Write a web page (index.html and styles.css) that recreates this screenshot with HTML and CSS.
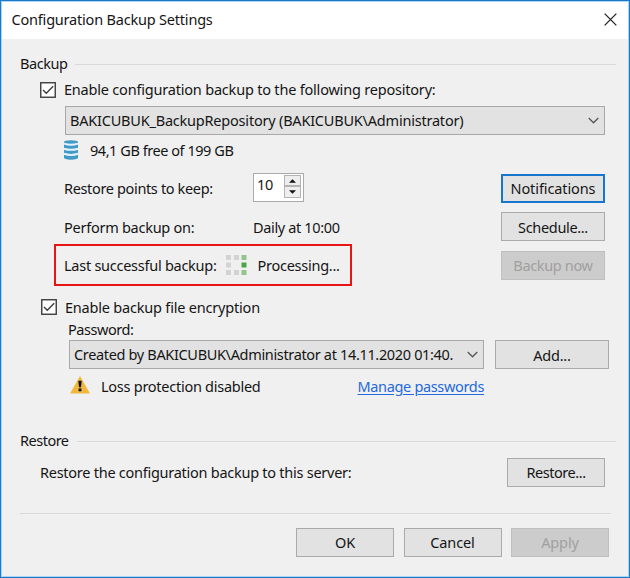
FILE: index.html
```html
<!DOCTYPE html>
<html lang="en">
<head>
<meta charset="utf-8">
<title>Configuration Backup Settings</title>
<link rel="stylesheet" href="styles.css">
</head>
<body>
<main class="dialog">
  <header class="titlebar">
    <span class="title">Configuration Backup Settings</span>
    <svg class="close" viewBox="0 0 14 14"><path d="M.7 .7 13.3 13.3M13.3 .7 .7 13.3"/></svg>
  </header>

  <section class="backup">
    <h2 class="group"><span class="t-backup">Backup</span></h2>
    <div class="check-row enable">
      <svg class="checkbox" viewBox="0 0 16 16"><rect x=".75" y=".75" width="14.5" height="14.5"/><path d="M3 8 6.3 11.3 13.2 4.2"/></svg>
      <span class="t-enable">Enable configuration backup to the following repository:</span>
    </div>
    <div class="select repository">
      <span class="t-repo">BAKICUBUK_BackupRepository (BAKICUBUK\Administrator)</span>
      <svg class="chevron" viewBox="0 0 12 7"><path d="M.8 .8 6 6 11.2 .8"/></svg>
    </div>
    <div class="capacity">
      <svg class="disk" viewBox="0 0 14 20">
        <path class="disk-body" d="M0 2.2Q0 .3 7 .3T14 2.2V17.6Q14 19.7 7 19.7T0 17.6Z"/>
        <path class="disk-gap" d="M0 3.6Q7 5.9 14 3.6M0 8.7Q7 11 14 8.7M0 13.8Q7 16.1 14 13.8"/>
      </svg>
      <span class="t-free">94,1 GB free of 199 GB</span>
    </div>
    <div class="setting">
      <span class="label t-points">Restore points to keep:</span>
      <div class="spinner">
        <span class="t-ten">10</span>
        <div class="steps">
          <div class="step"><svg viewBox="0 0 8 4"><path d="M0 4 4 0 8 4Z"/></svg></div>
          <div class="step"><svg viewBox="0 0 8 4"><path d="M0 0 4 4 8 0Z"/></svg></div>
        </div>
      </div>
      <div class="button focused"><span class="t-notif">Notifications</span></div>
    </div>
    <div class="setting">
      <span class="label t-perform">Perform backup on:</span>
      <span class="t-daily">Daily at 10:00</span>
      <div class="button"><span class="t-sched">Schedule...</span></div>
    </div>
    <div class="setting">
      <div class="highlight">
        <span class="t-last">Last successful backup:</span>
        <svg class="progress" viewBox="0 0 21 20">
          <path class="idle" d="M0 0h5v5H0zM8 0h5v5H8zM0 7.5h5v5H0zM0 15h5v5H0zM8 15h5v5H8z"/>
          <path class="near" d="M15.5 0h5v5h-5zM15.5 15h5v5h-5z"/>
          <path class="active" d="M15.5 7.5h5v5h-5z"/>
        </svg>
        <span class="t-proc">Processing...</span>
      </div>
      <div class="button disabled"><span class="t-now">Backup now</span></div>
    </div>
    <div class="check-row encryption">
      <svg class="checkbox" viewBox="0 0 16 16"><rect x=".75" y=".75" width="14.5" height="14.5"/><path d="M3 8 6.3 11.3 13.2 4.2"/></svg>
      <span class="t-encrypt">Enable backup file encryption</span>
    </div>
    <div class="password-label"><span class="t-pass">Password:</span></div>
    <div class="password-row">
      <div class="select password">
        <span class="t-created">Created by BAKICUBUK\Administrator at 14.11.2020 01:40.</span>
        <svg class="chevron" viewBox="0 0 12 7"><path d="M.8 .8 6 6 11.2 .8"/></svg>
      </div>
      <div class="button add"><span class="t-add">Add...</span></div>
    </div>
    <div class="loss-row">
      <svg class="warning" viewBox="0 0 20 18"><path class="triangle" d="M10 0 20 17.5H0Z"/><path class="mark" d="M8.3 4.8h3.4L11 11.3H9ZM8.6 12.6h2.8v2.7H8.6z"/></svg>
      <span class="t-loss">Loss protection disabled</span>
      <a class="link"><span class="t-manage">Manage passwords</span></a>
    </div>
  </section>

  <section class="restore">
    <h2 class="group"><span class="t-restore">Restore</span></h2>
    <div class="restore-row">
      <span class="t-server">Restore the configuration backup to this server:</span>
      <div class="button small"><span class="t-restbtn">Restore...</span></div>
    </div>
  </section>

  <footer class="actions">
    <div class="button small"><span class="t-ok">OK</span></div>
    <div class="button small"><span class="t-cancel">Cancel</span></div>
    <div class="button small disabled"><span class="t-apply">Apply</span></div>
  </footer>
</main>
</body>
</html>
```

FILE: styles.css
```css
* { box-sizing: border-box; }
body {
  margin: 0;
  font: 14.5px/20px "Noto Sans", "Open Sans", sans-serif;
  letter-spacing: -0.25px;
  color: #151515;
}
svg { display: block; flex: none; overflow: visible; }
span { white-space: nowrap; }
.dialog {
  width: 630px;
  height: 578px;
  border: 1px solid #1e78c8;
  box-shadow: inset 0 0 0 1px #a9d5f7;
  background: #f0f0f0;
  padding: 1px;
}
.titlebar {
  height: 37px;
  background: #fff;
  display: flex;
  align-items: center;
  justify-content: space-between;
  padding: 0 11px 1px 9.5px;
}
.close { width: 13px; height: 13px; margin-bottom: 2px; fill: none; stroke: #222; stroke-width: 1.4; }
.group {
  margin: 0 12px 0 18px;
  height: 20px;
  font: inherit;
  display: flex;
  align-items: center;
}
.group::after { content: ""; height: 1px; background: #d9d9d9; flex: 1; margin-left: 8px; }
.backup { padding-top: 15px; height: 392px; }
.check-row { display: flex; align-items: center; gap: 8px; height: 20px; }
.checkbox { width: 16px; height: 16px; fill: #fff; stroke: #3c3c3c; stroke-width: 1.4; }
.enable { margin: 5.5px 0 0 38px; }
.select {
  height: 29px;
  border: 1px solid #a8a8a8;
  background: #e2e2e2;
  display: flex;
  align-items: center;
  justify-content: space-between;
  padding: 0 5px 0 4px;
}
.chevron { width: 11px; height: 7px; fill: none; stroke: #555; stroke-width: 1.4; }
.repository { margin: 6.5px 23px 0 63px; }
.capacity { display: flex; align-items: center; gap: 12px; height: 30px; margin: 0 0 0 62px; }
.disk { width: 14px; height: 20px; }
.disk-body { fill: #4199c8; }
.disk-gap { fill: none; stroke: #e5f3fa; stroke-width: 2; }
.setting {
  height: 38.5px;
  margin: 0 23px 0 62px;
  display: flex;
  align-items: center;
}
.capacity + .setting { margin-top: 4px; }
.label { width: 189px; flex: none; }
.button {
  width: 104px;
  height: 29px;
  border: 1px solid #aaa;
  background: #e2e2e2;
  display: flex;
  align-items: center;
  justify-content: center;
}
.setting .button { margin-left: auto; }
.button.focused { border: 2px solid #1777cf; }
.button.disabled { background: #ccc; border-color: #c0c0c0; color: #a0a0a0; }
.button.small { width: 98px; }
.spinner {
  width: 51px;
  height: 29px;
  border: 1px solid #aaa;
  background: #fff;
  display: flex;
  justify-content: space-between;
  padding: 1px 2px 3px 3px;
  margin-top: -2px;
}
.t-ten { margin-top: -1px; letter-spacing: -0.4px; }
.steps { width: 17px; display: grid; grid-template-rows: 1fr 1fr; }
.step { border: 1px solid #b4b4b4; background: #eee; display: grid; place-items: center; }
.step svg { width: 7px; height: 4px; fill: #111; }
.highlight {
  width: 298px;
  height: 42px;
  margin: -2px 0 -2px -10px;
  border: 2px solid #e81313;
  padding-left: 8px;
  display: flex;
  align-items: center;
}
.t-last { width: 153px; }
.progress { width: 21px; height: 20px; margin: 0 10.5px 0 9px; }
.idle { fill: #d3d3d3; }
.near { fill: #93c48b; }
.active { fill: #4ba446; }
.encryption { margin: 12.5px 0 0 39px; }
.password-label { margin: 2px 0 1px 66px; height: 20px; }
.password-row { display: flex; justify-content: space-between; margin: 0 19px 0 67px; }
.password { width: 415px; }
.add { width: 114px; }
.loss-row { display: flex; align-items: center; height: 20px; margin: 6.5px 144px 0 68px; }
.warning { width: 20px; height: 18px; margin: -1px 11px 0 0; }
.triangle { fill: #f0b83e; }
.mark { fill: #111; }
.link { margin-left: auto; color: #2468df; text-decoration: underline; text-underline-offset: 2px; }
.restore { height: 82px; }
.restore-row {
  display: flex;
  align-items: center;
  justify-content: space-between;
  margin: 6px 23px 0 38px;
  height: 31px;
}
.actions {
  display: flex;
  justify-content: flex-end;
  gap: 9.5px;
  margin: 0 17px 0 18px;
  padding: 14px 2px 0 0;
  border-top: 1px solid #d9d9d9;
}

/* Optical centring: lift text by one pixel */
.title, .group span, .t-enable, .select span, .t-server,
.restore .button span, .actions span { margin-bottom: 2px; }

/* Tracking per label */
.title, .t-enable, .t-encrypt { letter-spacing: -0.2px; }
.t-repo { letter-spacing: -0.21px; }
.t-free { letter-spacing: -0.45px; }
.t-points, .t-daily { letter-spacing: -0.35px; }
.t-last, .t-perform, .t-proc, .t-loss, .t-server { letter-spacing: -0.26px; }
.t-notif { letter-spacing: -0.1px; }
.t-sched, .t-now, .t-manage, .t-created { letter-spacing: -0.34px; }
.t-pass, .t-backup, .t-restbtn { letter-spacing: -0.45px; }
.t-restore { letter-spacing: -0.5px; }
.t-cancel, .t-apply { letter-spacing: -0.1px; }
```
